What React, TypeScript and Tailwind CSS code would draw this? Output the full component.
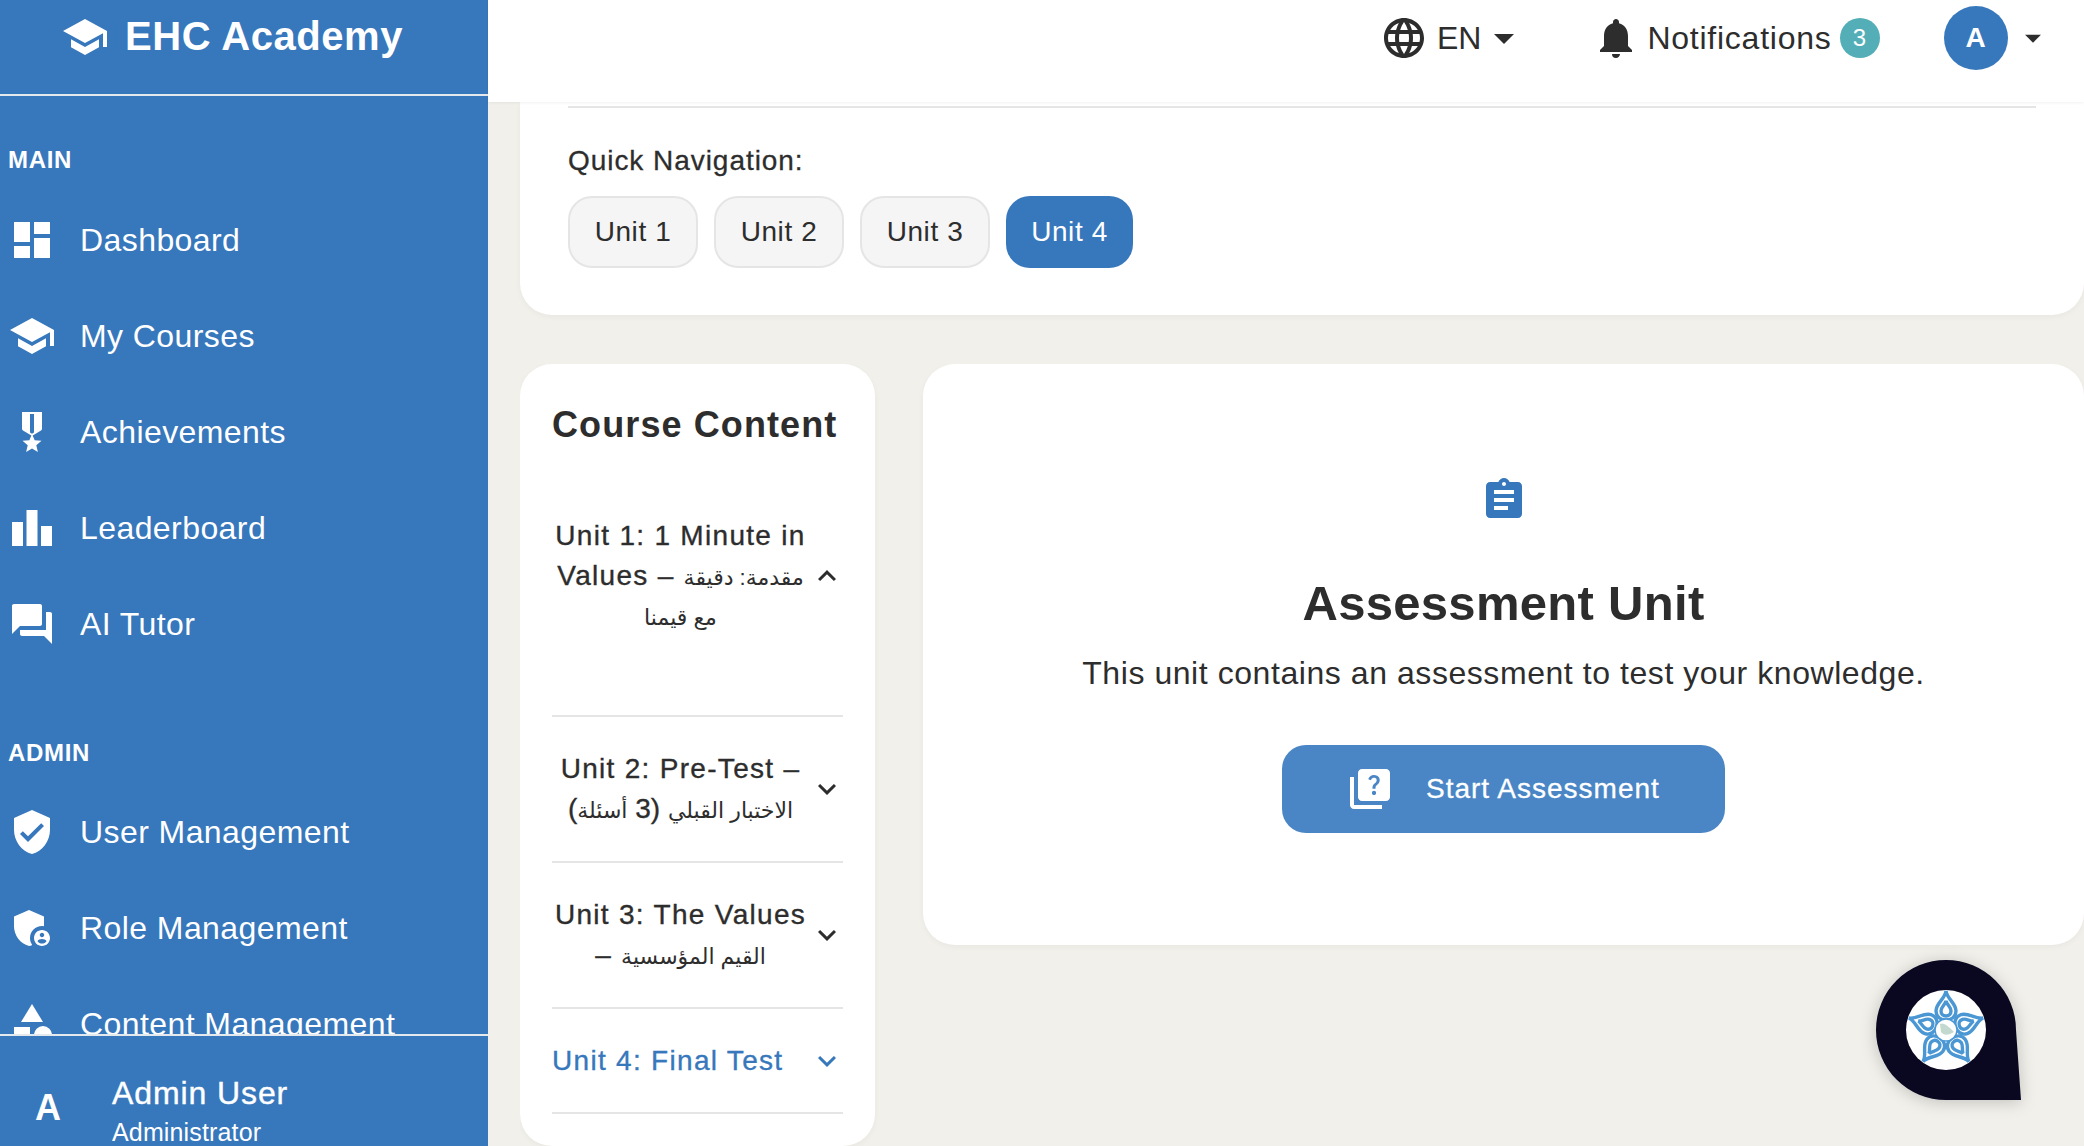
import type { ReactNode } from 'react';
import {
  MdDashboard,
  MdSchool,
  MdMilitaryTech,
  MdLeaderboard,
  MdForum,
  MdVerifiedUser,
  MdAdminPanelSettings,
  MdCategory,
  MdLanguage,
  MdArrowDropDown,
  MdNotifications,
  MdExpandMore,
  MdExpandLess,
  MdAssignment,
  MdQuiz,
} from 'react-icons/md';

const mainLinks = [
  { label: 'Dashboard', icon: <MdDashboard size={48} /> },
  { label: 'My Courses', icon: <MdSchool size={48} /> },
  { label: 'Achievements', icon: <MdMilitaryTech size={48} /> },
  { label: 'Leaderboard', icon: <MdLeaderboard size={48} /> },
  { label: 'AI Tutor', icon: <MdForum size={48} /> },
];

const adminLinks = [
  { label: 'User Management', icon: <MdVerifiedUser size={48} /> },
  { label: 'Role Management', icon: <MdAdminPanelSettings size={48} /> },
  { label: 'Content Management', icon: <MdCategory size={48} /> },
];

function NavItem({ icon, label }: { icon: ReactNode; label: string }) {
  return (
    <a className="flex h-24 items-center">
      <span className="flex w-16 shrink-0 justify-center">{icon}</span>
      <span className="ml-4 whitespace-nowrap text-[32px] tracking-[0.42px]">{label}</span>
    </a>
  );
}

// arabic part of a unit title, smaller and without the letter spacing
function Ar({ children }: { children: ReactNode }) {
  return <span className="text-[22px] leading-none tracking-normal [-webkit-text-stroke:0]">{children}</span>;
}

function UnitRow({
  title,
  open,
  active,
  children,
}: {
  title: ReactNode;
  open?: boolean;
  active?: boolean;
  children?: ReactNode;
}) {
  return (
    <div className="border-b-2 border-[#e5e5e5]">
      <div
        className={`flex items-center justify-between text-[28px] leading-[40px] tracking-[1.3px] [-webkit-text-stroke:0.35px] ${
          active ? 'py-[31.5px] text-[#3777bc]' : 'py-[32px] text-[#2d2d2d]'
        }`}
      >
        <span className={active ? 'w-[258px] text-left' : 'w-[258px] text-center'}>{title}</span>
        <span className="mr-[-2px]">
          {open ? <MdExpandLess size={36} /> : <MdExpandMore size={36} />}
        </span>
      </div>
      {children}
    </div>
  );
}

function StarLogo() {
  const angles = [0, 72, 144, 216, 288];
  return (
    <svg viewBox="-40 -40 80 80" className="h-20 w-20">
      <defs>
        <clipPath id="logo-circle">
          <circle r="40" />
        </clipPath>
      </defs>
      <circle r="40" fill="#ffffff" />
      <g clipPath="url(#logo-circle)" fill="none" stroke="#4a97d4" strokeWidth="3.4">
        {angles.map(a => (
          <g key={a} transform={`rotate(${a})`}>
            <path d="M0 -39 C1 -31 10 -27 10 -19 C10 -13 5 -10 0 -10 C-5 -10 -10 -13 -10 -19 C-10 -27 -1 -31 0 -39Z" />
            <path d="M0 -29 C1 -25 5 -23 5 -19 C5 -16 3 -14 0 -14 C-3 -14 -5 -16 -5 -19 C-5 -23 -1 -25 0 -29Z" />
          </g>
        ))}
        <circle r="11" fill="#ffffff" strokeWidth="1.5" />
        <path d="M-6 -6 C-2 -8 2 -4 8 2 C3 5 -2 6 -5 2Z" fill="#c3d8cf" stroke="none" />
      </g>
    </svg>
  );
}

export default function App() {
  return (
    <div className="flex h-screen w-full overflow-hidden bg-[#f1f0eb] font-['Liberation_Sans','DejaVu_Sans',sans-serif] text-[#2d2d2d]">
      {/* Sidebar */}
      <aside className="flex h-full w-[488px] shrink-0 flex-col bg-[#3777bc] text-white">
        <div className="flex h-[96px] shrink-0 items-start border-b-2 border-[#e4e9ee] pl-[63px] pt-[12px]">
          <MdSchool size={48} className="mt-[1px] -ml-[2px]" />
          <span className="ml-[16px] text-[40px] font-bold leading-[48px] tracking-[0.55px]">EHC Academy</span>
        </div>
        <nav className="min-h-0 flex-1 overflow-hidden">
          <div className="flex h-[96px] items-end pb-[17px] pl-2 text-[24px] font-bold leading-[30px] tracking-[0.7px]">MAIN</div>
          {mainLinks.map(l => (
            <NavItem key={l.label} {...l} />
          ))}
          <div className="flex h-[112px] items-end pb-[16px] pl-2 text-[24px] font-bold leading-[30px] tracking-[0.7px]">ADMIN</div>
          {adminLinks.map(l => (
            <NavItem key={l.label} {...l} />
          ))}
        </nav>
        <div className="flex h-[112px] shrink-0 items-start border-t-2 border-[#e4e9ee]">
          <span className="mt-[50px] w-24 text-center text-[36px] font-bold leading-[44px]">A</span>
          <div className="ml-4 mt-[37px]">
            <div className="text-[32px] leading-[40px] tracking-[0.9px] [-webkit-text-stroke:0.4px]">Admin User</div>
            <div className="mt-[2px] text-[25px] leading-[34px] tracking-[0.15px]">Administrator</div>
          </div>
        </div>
      </aside>

      {/* Main column */}
      <div className="flex min-w-0 flex-1 flex-col">
        <header className="relative z-10 flex h-[102px] shrink-0 items-start bg-white pt-[14px] shadow-[0_1px_3px_rgba(0,0,0,0.06)]">
          <div className="ml-[894px] flex h-12 items-center">
            <MdLanguage size={48} className="-ml-[2px]" />
            <span className="ml-[9px] text-[32px]">EN</span>
            <MdArrowDropDown size={48} className="ml-[-1px]" />
          </div>
          <div className="ml-[64px] flex h-12 items-center">
            <MdNotifications size={48} />
            <span className="ml-[7px] text-[32px] tracking-[0.75px]">Notifications</span>
            <span className="ml-[8px] flex h-10 w-10 items-center justify-center rounded-full bg-[#53aeb7] text-[24px] text-white">
              3
            </span>
          </div>
          <div className="ml-[64px] -mt-[8px] flex items-center">
            <span className="flex h-16 w-16 items-center justify-center rounded-full bg-[#3777bc] text-[28px] font-bold text-white">
              A
            </span>
            <MdArrowDropDown size={38} className="ml-[6px]" />
          </div>
        </header>

        <main className="flex min-h-0 flex-1 flex-col pl-8">
          {/* Top card, scrolled under the header */}
          <section className="h-[213px] shrink-0 rounded-b-[32px] bg-white px-12 pt-[4px] shadow-[0_2px_6px_rgba(0,0,0,0.04)]">
            <div className="border-t-2 border-[#e5e5e5]" />
            <p className="mt-[33px] text-[28px] leading-[40px] tracking-[0.95px] [-webkit-text-stroke:0.3px]">Quick Navigation:</p>
            <div className="mt-[15px] flex gap-4">
              {['Unit 1', 'Unit 2', 'Unit 3'].map(u => (
                <button
                  key={u}
                  className="h-[72px] w-[130px] rounded-[24px] border-2 border-[#e5e5e5] bg-[#f5f5f5] text-[28px] tracking-[0.6px]"
                >
                  {u}
                </button>
              ))}
              <button className="h-[72px] w-[127px] rounded-[24px] bg-[#3777bc] text-[28px] tracking-[0.6px] text-white">
                Unit 4
              </button>
            </div>
          </section>

          <div className="mt-[49px] flex min-h-0 flex-1 items-start gap-12 overflow-hidden">
            {/* Course content */}
            <section className="h-[782px] w-[355px] shrink-0 rounded-[32px] bg-white px-8 pt-[37px] shadow-[0_2px_6px_rgba(0,0,0,0.04)]">
              <h2 className="mb-[35px] text-[36px] font-bold leading-[48px] tracking-[1.1px]">Course Content</h2>
              <UnitRow
                open
                title={
                  <>
                    Unit 1: 1 Minute in Values – <Ar>مقدمة: دقيقة مع قيمنا</Ar>
                  </>
                }
              >
                <div className="h-[47px]" />
              </UnitRow>
              <UnitRow
                title={
                  <>
                    Unit 2: Pre-Test – <Ar>الاختبار القبلي</Ar> (3 <Ar>أسئلة</Ar>)
                  </>
                }
              />
              <UnitRow
                title={
                  <>
                    Unit 3: The Values – <Ar>القيم المؤسسية</Ar>
                  </>
                }
              />
              <UnitRow active title="Unit 4: Final Test" />
            </section>

            {/* Assessment */}
            <section className="flex h-[581px] min-w-0 flex-1 flex-col items-center rounded-[32px] bg-white pt-[112px] shadow-[0_2px_6px_rgba(0,0,0,0.04)]">
              <MdAssignment size={48} className="text-[#3777bc]" />
              <h1 className="mt-[49px] text-[49px] font-bold leading-[60px] tracking-[0.3px]">Assessment Unit</h1>
              <p className="mt-[16px] text-[32px] leading-[48px] tracking-[0.56px]">
                This unit contains an assessment to test your knowledge.
              </p>
              <button className="mt-[48px] flex h-[88px] w-[443px] items-center rounded-[24px] bg-[#4a86c5] pl-[64px] text-white">
                <MdQuiz size={48} />
                <span className="ml-[32px] text-[28px] tracking-[1px] [-webkit-text-stroke:0.3px]">Start Assessment</span>
              </button>
            </section>
          </div>
        </main>
      </div>

      {/* Chat bubble */}
      <div className="absolute left-[1876px] top-[960px] h-[140px] w-[145px]">
        <svg viewBox="0 0 145 140" className="h-full w-full drop-shadow-[0_2px_8px_rgba(0,0,0,0.2)]">
          <path d="M70 0 A70 70 0 0 1 140 70 L145 140 L70 140 A70 70 0 0 1 70 0Z" fill="#0a0820" />
        </svg>
        <div className="absolute left-[30px] top-[30px]">
          <StarLogo />
        </div>
      </div>
    </div>
  );
}
